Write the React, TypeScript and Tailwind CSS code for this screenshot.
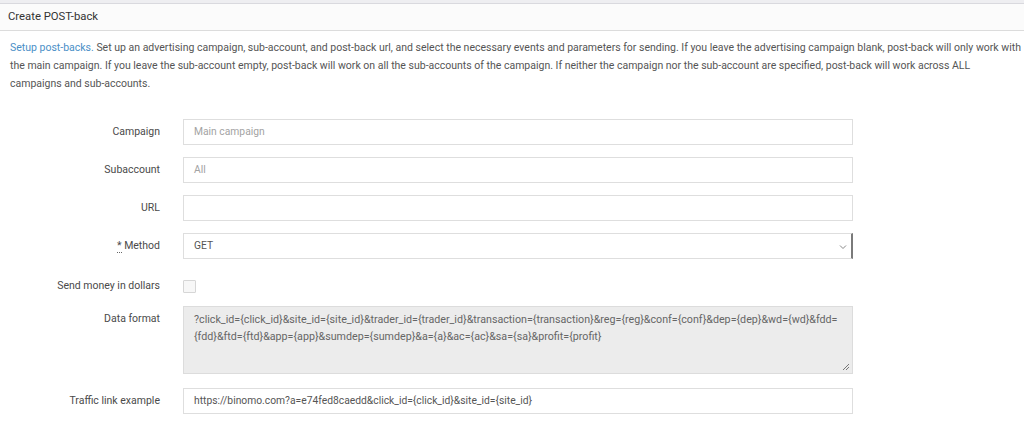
import React from "react"

const font = { fontFamily: "Roboto, 'Noto Sans', sans-serif" }

function Label({ children, top }: { children: React.ReactNode; top?: boolean }) {
  return (
    <div
      className={`w-[160px] shrink-0 text-right text-[10.5px] leading-[18px] text-[#4a4a4a] ${
        top ? "self-start pt-[4px]" : ""
      }`}
    >
      {children}
    </div>
  )
}

function TextInput({ value, placeholder }: { value?: string; placeholder?: string }) {
  return (
    <div className="ml-[23px] flex h-[26px] w-[670px] items-center border border-[#dedede] bg-white px-[10px] text-[10.3px]">
      {value ? (
        <span className="text-[#555]">{value}</span>
      ) : (
        <span className="text-[#a3a3a3]">{placeholder}</span>
      )}
    </div>
  )
}

export default function App() {
  return (
    <div className="h-[423px] w-[1024px] overflow-hidden bg-white" style={font}>
      <div className="h-[4px] border-b border-[#d9d9de] bg-[#eeeef1]" />
      <div className="flex h-[27px] items-center border-b border-[#dcdcdc] bg-[#fbfbfb] px-[8px] text-[11.3px] text-[#333]">
        Create POST-back
      </div>

      <div className="w-[1100px] whitespace-nowrap px-[10px] pt-[8px] text-[10.5px] leading-[18px] text-[#555]">
        <a className="text-[#4a8fc7]">Setup post-backs.</a> Set up an advertising campaign, sub-account, and
        post-back url, and select the necessary events and parameters for sending. If you leave the advertising
        campaign blank, post-back will only work with
        <br />
        the main campaign. If you leave the sub-account empty, post-back will work on all the sub-accounts of the
        campaign. If neither the campaign nor the sub-account are specified, post-back will work across ALL
        <br />
        campaigns and sub-accounts.
      </div>

      <div className="mt-[26px] flex flex-col">
        <div className="flex items-center">
          <Label>Campaign</Label>
          <TextInput placeholder="Main campaign" />
        </div>
        <div className="mt-[12px] flex items-center">
          <Label>Subaccount</Label>
          <TextInput placeholder="All" />
        </div>
        <div className="mt-[12px] flex items-center">
          <Label>URL</Label>
          <TextInput />
        </div>
        <div className="mt-[12px] flex items-center">
          <Label>
            <span className="border-b border-dotted border-[#666]">*</span> Method
          </Label>
          <div className="ml-[23px] flex h-[26px] w-[670px] items-center justify-between border border-r-2 border-[#dedede] border-r-[#7a7a7a] bg-white pl-[10px] pr-[4px] text-[10.3px] text-[#555]">
            <span>GET</span>
            <svg width="8" height="6" viewBox="0 0 8 6" className="mt-[2px]">
              <path d="M1 1.5 L4 4.5 L7 1.5" fill="none" stroke="#888" strokeWidth="1" />
            </svg>
          </div>
        </div>
        <div className="mt-[20px] flex h-[14px] items-center">
          <Label>Send money in dollars</Label>
          <div className="ml-[23px] h-[13px] w-[13px] rounded-[1px] border border-[#d6d6d6] bg-[#f7f7f7]" />
        </div>
        <div className="mt-[13px] flex">
          <Label top>Data format</Label>
          <div className="relative ml-[23px] h-[68px] w-[670px] whitespace-nowrap border border-[#dcdcdc] bg-[#ececec] px-[10px] pt-[4px] text-[10.7px] leading-[17px] text-[#666]">
            ?click_id={"{click_id}"}&amp;site_id={"{site_id}"}&amp;trader_id={"{trader_id}"}&amp;transaction=
            {"{transaction}"}&amp;reg={"{reg}"}&amp;conf={"{conf}"}&amp;dep={"{dep}"}&amp;wd={"{wd}"}&amp;fdd=
            <br />
            {"{fdd}"}&amp;ftd={"{ftd}"}&amp;app={"{app}"}&amp;sumdep={"{sumdep}"}&amp;a={"{a}"}&amp;ac={"{ac}"}&amp;sa=
            {"{sa}"}&amp;profit={"{profit}"}
            <svg width="9" height="9" viewBox="0 0 9 9" className="absolute bottom-[2px] right-[2px]">
              <path d="M8 2 L2 8 M8 5 L5 8" stroke="#777" strokeWidth="1" />
            </svg>
          </div>
        </div>
        <div className="mt-[14px] flex items-center">
          <Label>Traffic link example</Label>
          <TextInput value="https://binomo.com?a=e74fed8caedd&click_id={click_id}&site_id={site_id}" />
        </div>
      </div>
    </div>
  )
}
